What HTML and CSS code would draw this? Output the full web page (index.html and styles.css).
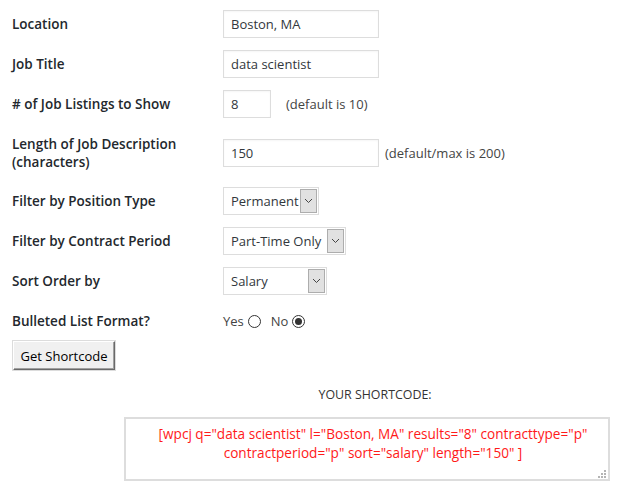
FILE: index.html
```html
<!DOCTYPE html>
<html>
<head>
<meta charset="utf-8">
<link rel="stylesheet" href="styles.css">
</head>
<body>
<div class="form">
  <div class="row">
    <div class="label">Location</div>
    <div class="field"><div class="input w-wide">Boston, MA</div></div>
  </div>
  <div class="row">
    <div class="label">Job Title</div>
    <div class="field"><div class="input w-wide">data scientist</div></div>
  </div>
  <div class="row">
    <div class="label">#&nbsp;of Job Listings to Show</div>
    <div class="field"><div class="input w-small">8</div><span class="hint hint-a">(default is 10)</span></div>
  </div>
  <div class="row row-tall">
    <div class="label">Length of Job Description<br>(characters)</div>
    <div class="field"><div class="input w-wide">150</div><span class="hint hint-b">(default/max is 200)</span></div>
  </div>
  <div class="row">
    <div class="label">Filter by Position Type</div>
    <div class="field"><div class="select s-perm"><span class="select-text">Permanent</span><span class="select-arrow"><svg width="9" height="6" viewBox="0 0 9 6"><path d="M1 1l3.5 3.5L8 1" fill="none" stroke="#444" stroke-width="1"/></svg></span></div></div>
  </div>
  <div class="row">
    <div class="label">Filter by Contract Period</div>
    <div class="field"><div class="select s-part"><span class="select-text">Part-Time Only</span><span class="select-arrow"><svg width="9" height="6" viewBox="0 0 9 6"><path d="M1 1l3.5 3.5L8 1" fill="none" stroke="#444" stroke-width="1"/></svg></span></div></div>
  </div>
  <div class="row">
    <div class="label">Sort Order by</div>
    <div class="field"><div class="select s-sal"><span class="select-text">Salary</span><span class="select-arrow"><svg width="9" height="6" viewBox="0 0 9 6"><path d="M1 1l3.5 3.5L8 1" fill="none" stroke="#444" stroke-width="1"/></svg></span></div></div>
  </div>
  <div class="row row-radio">
    <div class="label">Bulleted List Format?</div>
    <div class="field radios">
      <span class="radio-label">Yes</span><span class="radio"></span>
      <span class="radio-label no">No</span><span class="radio checked"></span>
    </div>
  </div>
  <div class="actions">
    <button class="btn">Get Shortcode</button>
  </div>
  <div class="result">
    <div class="result-title">YOUR SHORTCODE:</div>
    <div class="textarea">[wpcj q="data scientist" l="Boston, MA" results="8" contracttype="p" contractperiod="p" sort="salary" length="150" ]<span class="grip"><svg width="9" height="9" viewBox="0 0 9 9"><g fill="#b4b4b4"><rect x="6" y="0" width="2" height="2"/><rect x="3" y="3" width="2" height="2"/><rect x="6" y="3" width="2" height="2"/><rect x="0" y="6" width="2" height="2"/><rect x="3" y="6" width="2" height="2"/><rect x="6" y="6" width="2" height="2"/></g></svg></span></div>
  </div>
</div>
</body>
</html>
```
FILE: styles.css
```css
html, body {
  margin: 0;
  padding: 0;
  background: #fff;
}
body {
  font-family: "Open Sans", "Noto Sans", sans-serif;
  font-size: 13px;
  color: #23282d;
}
.form {
  padding: 10px 0 0 12px;
}
.row {
  display: flex;
  align-items: center;
  min-height: 28px;
  margin-bottom: 12px;
}
.row-tall {
  margin-top: 17px;
  margin-bottom: 16px;
}
.row-radio {
  margin-bottom: 6px;
}
.label {
  width: 211px;
  flex: none;
  font-weight: 600;
  font-size: 13.5px;
  line-height: 18px;
}
.field {
  display: flex;
  align-items: center;
}
.input {
  box-sizing: border-box;
  height: 28px;
  border: 1px solid #ddd;
  box-shadow: inset 0 1px 2px rgba(0,0,0,0.04);
  padding: 0 7px;
  line-height: 26px;
  color: #32373c;
  font-size: 13px;
}
.w-wide { width: 156px; }
.w-small { width: 48px; }
.hint {
  color: #444;
  font-size: 13px;
}
.hint-a { margin-left: 15px; }
.hint-b { margin-left: 6px; }
.select {
  box-sizing: border-box;
  height: 28px;
  border: 1px solid #ddd;
  display: flex;
  align-items: stretch;
  padding: 1px 1px 1px 0;
  background: #fff;
  white-space: nowrap;
}
.s-perm { width: 96px; }
.s-part { width: 123px; }
.s-sal { width: 104px; }
.select-text {
  flex: 1;
  padding-left: 7px;
  line-height: 24px;
  color: #32373c;
  font-size: 13px;
  overflow: hidden;
}
.select-arrow {
  flex: none;
  box-sizing: border-box;
  width: 17px;
  background: #e1e1e1;
  border: 1px solid #adadad;
  display: flex;
  align-items: center;
  justify-content: center;
}
.radios {
  font-size: 13px;
  color: #444;
}
.radio {
  box-sizing: border-box;
  width: 13px;
  height: 13px;
  border: 1px solid #333;
  border-radius: 50%;
  margin-left: 4px;
  position: relative;
  background: #fff;
}
.radio.checked::after {
  content: "";
  position: absolute;
  left: 2px;
  top: 2px;
  width: 7px;
  height: 7px;
  border-radius: 50%;
  background: #333;
}
.radio-label.no { margin-left: 10px; }
.actions {
  padding-left: 1px;
}
.btn {
  font-family: "Open Sans", "Noto Sans", sans-serif;
  font-size: 13px;
  color: #000;
  background: #f0f0f0;
  border: 1px solid;
  border-color: #fff #696969 #696969 #fff;
  box-shadow: inset -1px -1px 0 #a0a0a0;
  height: 29px;
  width: 102px;
  padding: 0;
  outline: 1px solid #dcdcdc;
}
.result {
  margin-left: 112px;
  width: 486px;
}
.result-title {
  text-align: center;
  font-size: 12.4px;
  color: #333;
  margin-top: 17px;
  line-height: 16px;
  padding-left: 16px;
}
.textarea {
  box-sizing: border-box;
  margin-top: 14px;
  height: 64px;
  border: 2px solid #ddd;
  padding: 5px 2px 5px 14px;
  text-align: center;
  color: #ff1a1a;
  font-size: 13.6px;
  line-height: 19px;
  position: relative;
}
.grip {
  position: absolute;
  right: 1px;
  bottom: 0;
  line-height: 0;
}
```
